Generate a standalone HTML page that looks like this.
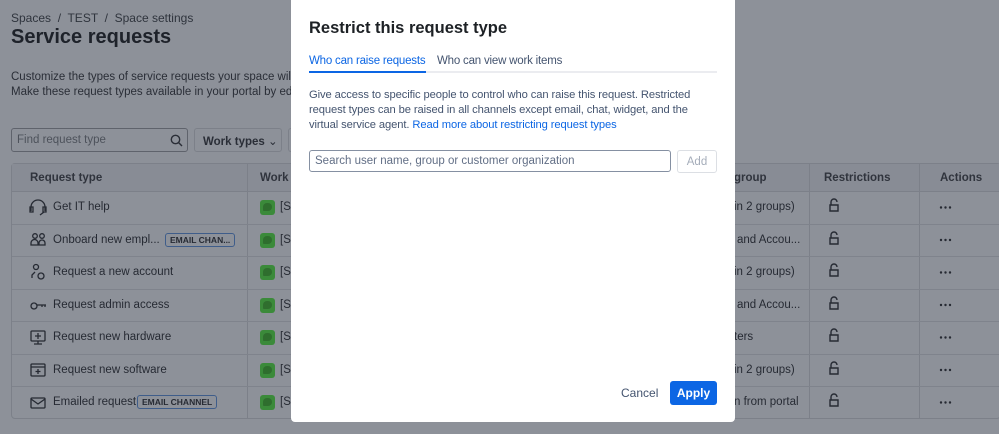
<!DOCTYPE html>
<html><head><style>
*{box-sizing:border-box;margin:0;padding:0}
body{width:999px;height:434px;overflow:hidden;background:#8d9199;font-family:"Liberation Sans",sans-serif;color:#252a33;position:relative;font-size:12px}
.abs{position:absolute;white-space:nowrap}
.crumb{left:11px;top:11px;font-size:12px;color:#2f343d}
h1{position:absolute;left:11px;top:26px;font-size:20px;font-weight:bold;color:#1e222a}
.desc{left:11px;top:70px;font-size:11.5px;line-height:15px;color:#2a2e37}
.search{left:11px;top:128px;width:177px;height:24px;border:1px solid #5f636c;border-radius:3px;padding:5px 5px;font-size:11.5px;color:#4d525b}
.btn{left:194px;top:128px;width:88px;height:24px;border:1px solid #7c8089;border-radius:3px;padding:5px 8px;font-size:11.5px;font-weight:bold;color:#2a2e37}
.table{left:11px;top:163px;width:990px;height:256px;border:1px solid #7c8089;border-radius:4px}
.hdr{position:absolute;left:0;top:0;width:100%;height:28px;border-bottom:1px solid #7c8089;background:#888c95}
.row{position:absolute;left:0;width:100%;height:32.5px;border-bottom:1px solid #7f838c}
.vl{position:absolute;top:0;width:1px;height:100%;background:#7c8089}
.th{position:absolute;top:8px;font-weight:bold;font-size:11.5px;color:#30343d}
.cell{position:absolute;font-size:11.5px;top:9px;color:#262a33}
.lozenge{position:absolute;top:8px;border:1px solid #3f5d8a;border-radius:3px;font-size:8.5px;font-weight:bold;padding:1px 4px;color:#262a33}
.gi{position:absolute;left:248px;top:8px;width:15px;height:15px;background:#3b8a3a;border-radius:3px}
.gi:after{content:"";position:absolute;left:3px;top:3px;width:9px;height:8px;background:#2f6e2e;border-radius:4px 4px 4px 1px}
.modal{left:291px;top:0;width:444px;height:422px;background:#fff;border-radius:0 0 4px 4px}
</style></head><body>
<div class="abs crumb">Spaces &nbsp;/&nbsp; TEST &nbsp;/&nbsp; Space settings</div>
<h1>Service requests</h1>
<div class="abs desc">Customize the types of service requests your space will u<br>Make these request types available in your portal by editi</div>
<div class="abs search">Find request type<svg style="position:absolute;right:4px;top:5px" width="13" height="13" viewBox="0 0 13 13"><circle cx="5.5" cy="5.5" r="4.2" fill="none" stroke="#2a2e37" stroke-width="1.4"/><path d="M8.5 8.5L12 12" stroke="#2a2e37" stroke-width="1.4"/></svg></div>
<div class="abs btn">Work types <span style="font-weight:normal">&#8964;</span></div>
<div class="abs" style="left:288px;top:128px;width:5px;height:24px;border:1px solid #7c8089;border-right:none;border-radius:3px 0 0 3px"></div>
<div class="abs table">
 <div class="hdr"><div class="th" style="left:18px">Request type</div><div class="th" style="left:248px">Work t</div><div class="th" style="left:722px">group</div><div class="th" style="left:812px">Restrictions</div><div class="th" style="left:928px">Actions</div></div>
 <div class="vl" style="left:235px"></div><div class="vl" style="left:797px"></div><div class="vl" style="left:907px"></div>
 <div class="row" style="top:28px"><div class="cell" style="left:41px">Get IT help</div><div class="gi"></div><div class="cell" style="left:268px">[S</div><div class="cell" style="left:722px">in 2 groups)</div></div>
 <div class="row" style="top:60.5px"><div class="cell" style="left:41px">Onboard new empl...</div><div class="lozenge" style="left:153px">EMAIL CHAN...</div><div class="gi"></div><div class="cell" style="left:268px">[S</div><div class="cell" style="left:725px">and Accou...</div></div>
 <div class="row" style="top:93px"><div class="cell" style="left:41px">Request a new account</div><div class="gi"></div><div class="cell" style="left:268px">[S</div><div class="cell" style="left:722px">in 2 groups)</div></div>
 <div class="row" style="top:125.5px"><div class="cell" style="left:41px">Request admin access</div><div class="gi"></div><div class="cell" style="left:268px">[S</div><div class="cell" style="left:725px">and Accou...</div></div>
 <div class="row" style="top:158px"><div class="cell" style="left:41px">Request new hardware</div><div class="gi"></div><div class="cell" style="left:268px">[S</div><div class="cell" style="left:722px">ters</div></div>
 <div class="row" style="top:190.5px"><div class="cell" style="left:41px">Request new software</div><div class="gi"></div><div class="cell" style="left:268px">[S</div><div class="cell" style="left:722px">in 2 groups)</div></div>
 <div class="row" style="top:223px;border-bottom:none"><div class="cell" style="left:41px">Emailed request</div><div class="lozenge" style="left:125px">EMAIL CHANNEL</div><div class="gi"></div><div class="cell" style="left:268px">[S</div><div class="cell" style="left:722px">n from portal</div></div>
</div>
<svg class="abs" style="left:0;top:0" width="999" height="434">
<g fill="none" stroke="#262a33" stroke-width="1.3">
<path d="M31 211v-4a7 7 0 0 1 14 0v4M30 207h3v5h-3zM43 207h3v5h-3zM44 212l-4 3"/>
<circle cx="35" cy="236" r="2.3"/><circle cx="42" cy="236" r="2.3"/><path d="M31 245v-2a3 3 0 0 1 7 0v2zM39 245v-2a3 3 0 0 1 6 0v2z"/>
<circle cx="36" cy="267" r="2.5"/><path d="M32 278v-3l3-3"/><circle cx="41" cy="276" r="3"/>
<circle cx="34" cy="306" r="3"/><path d="M37 305h9M42 305v2M45 305v2"/>
<rect x="31" y="331" width="14" height="10" rx="1"/><path d="M38 333v6M35 336h6M38 341v3M34 344h8"/>
<rect x="31" y="364" width="14" height="12" rx="1"/><path d="M31 367h14M38 369v5M35.5 371.5h5"/>
<rect x="31" y="398" width="14" height="10" rx="1"/><path d="M31 399l7 5 7-5"/>
</g>
<g fill="none" stroke="#262a33" stroke-width="1.4">
<path d="M831 205v-3a3 3 0 0 1 6 0M830 205h8v6h-8z"/><path d="M831 238v-3a3 3 0 0 1 6 0M830 238h8v6h-8z"/><path d="M831 270v-3a3 3 0 0 1 6 0M830 270h8v6h-8z"/><path d="M831 303v-3a3 3 0 0 1 6 0M830 303h8v6h-8z"/><path d="M831 335v-3a3 3 0 0 1 6 0M830 335h8v6h-8z"/><path d="M831 368v-3a3 3 0 0 1 6 0M830 368h8v6h-8z"/><path d="M831 400v-3a3 3 0 0 1 6 0M830 400h8v6h-8z"/>
</g>
<g fill="#262a33"><circle cx="941" cy="207.5" r="1.2"/><circle cx="945.5" cy="207.5" r="1.2"/><circle cx="950" cy="207.5" r="1.2"/><circle cx="941" cy="240" r="1.2"/><circle cx="945.5" cy="240" r="1.2"/><circle cx="950" cy="240" r="1.2"/><circle cx="941" cy="272.5" r="1.2"/><circle cx="945.5" cy="272.5" r="1.2"/><circle cx="950" cy="272.5" r="1.2"/><circle cx="941" cy="305" r="1.2"/><circle cx="945.5" cy="305" r="1.2"/><circle cx="950" cy="305" r="1.2"/><circle cx="941" cy="337.5" r="1.2"/><circle cx="945.5" cy="337.5" r="1.2"/><circle cx="950" cy="337.5" r="1.2"/><circle cx="941" cy="370" r="1.2"/><circle cx="945.5" cy="370" r="1.2"/><circle cx="950" cy="370" r="1.2"/><circle cx="941" cy="402.5" r="1.2"/><circle cx="945.5" cy="402.5" r="1.2"/><circle cx="950" cy="402.5" r="1.2"/></g>
</svg>
<div class="abs modal">
 <div class="abs" style="left:18px;top:19px;font-size:16.5px;font-weight:bold;color:#1d2125">Restrict this request type</div>
 <div class="abs" style="left:18px;top:55px;font-size:11.5px;color:#0c66e4;letter-spacing:-0.2px">Who can raise requests</div>
 <div class="abs" style="left:146px;top:55px;font-size:11.5px;color:#44546f;letter-spacing:-0.2px">Who can view work items</div>
 <div class="abs" style="left:18px;top:71px;width:408px;height:2px;background:#ebecf0"></div>
 <div class="abs" style="left:18px;top:71px;width:117px;height:2px;background:#0c66e4"></div>
 <div class="abs" style="left:18px;top:88px;font-size:11.2px;line-height:15px;color:#44546f;letter-spacing:-0.1px">Give access to specific people to control who can raise this request. Restricted<br>request types can be raised in all channels except email, chat, widget, and the<br>virtual service agent. <span style="color:#0c66e4">Read more about restricting request types</span></div>
 <div class="abs" style="left:18px;top:150px;width:362px;height:22px;border:1px solid #8590a2;border-radius:3px;padding:4px 5px;font-size:11.5px;color:#626f86">Search user name, group or customer organization</div>
 <div class="abs" style="left:386px;top:150px;width:40px;height:23px;border:1px solid #dcdfe4;border-radius:3px;padding:5px 0;text-align:center;font-size:11.5px;color:#a5adba">Add</div>
 <div class="abs" style="left:330px;top:386px;font-size:12px;color:#44546f">Cancel</div>
 <div class="abs" style="left:379px;top:381px;width:47px;height:24px;background:#0c66e4;border-radius:3px;color:#fff;font-weight:bold;font-size:12px;text-align:center;padding-top:5px">Apply</div>
</div>
</body></html>
